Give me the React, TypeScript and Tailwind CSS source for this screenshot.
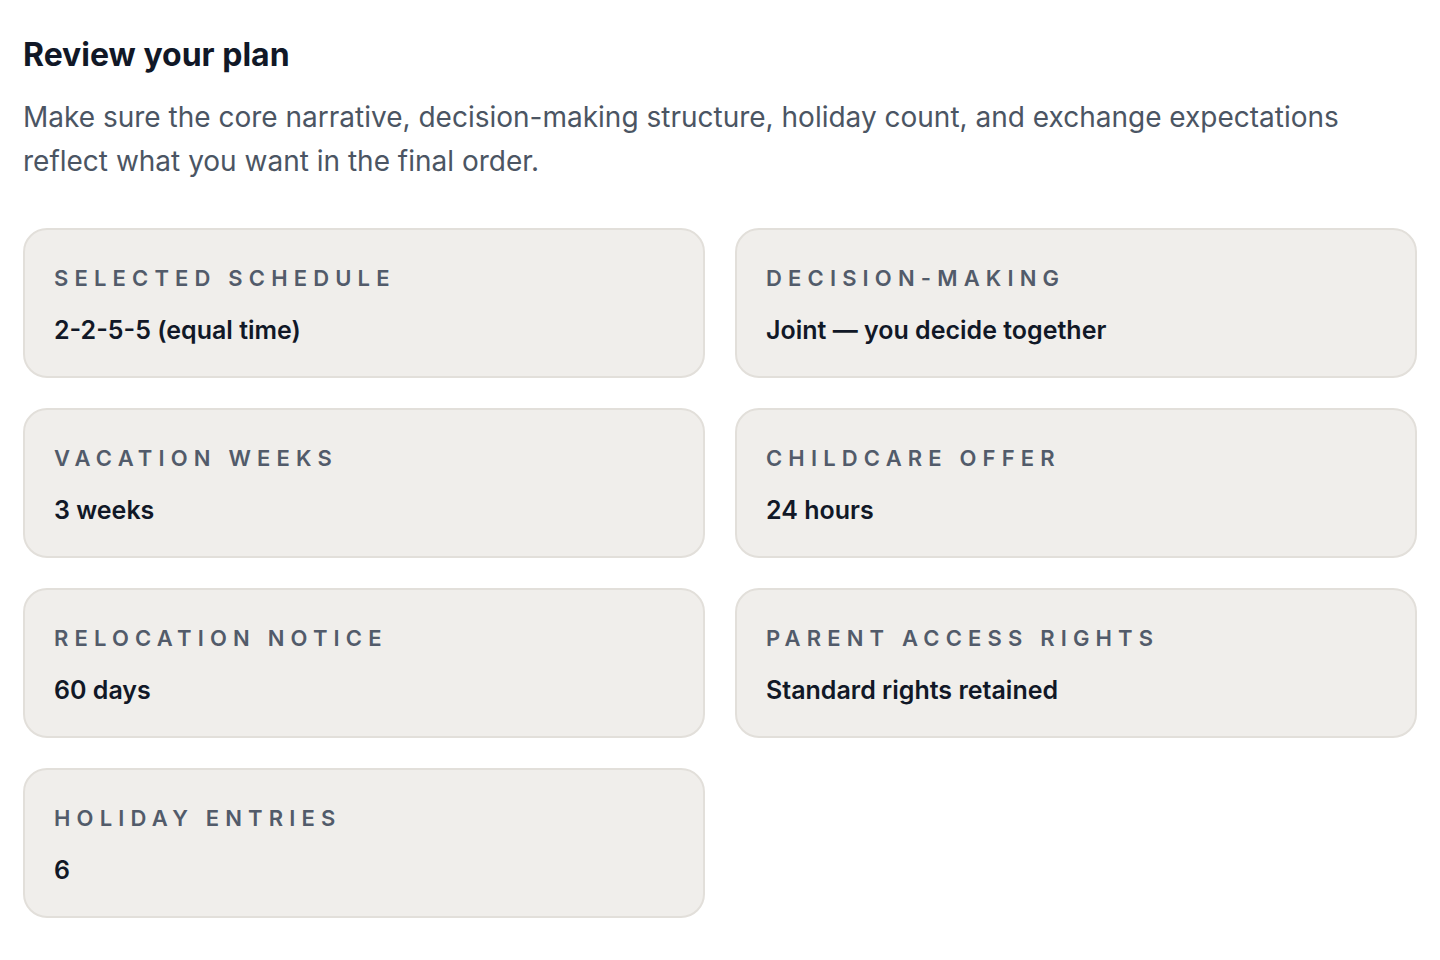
import React from 'react';

type PlanItem = {
  label: string;
  value: string;
};

const planItems: PlanItem[] = [
  { label: 'Selected schedule', value: '2-2-5-5 (equal time)' },
  { label: 'Decision-making', value: 'Joint — you decide together' },
  { label: 'Vacation weeks', value: '3 weeks' },
  { label: 'Childcare offer', value: '24 hours' },
  { label: 'Relocation notice', value: '60 days' },
  { label: 'Parent access rights', value: 'Standard rights retained' },
  { label: 'Holiday entries', value: '6' },
];

const SummaryCard: React.FC<{ item: PlanItem }> = ({ item }) => (
  <div className="h-[150px] rounded-[24px] border-2 border-[#e2dfda] bg-[#f0eeeb] px-[29px] pt-[33px]">
    <p className="text-[22px] leading-[30px] font-semibold uppercase tracking-[0.28em] text-[#525b6a]">
      {item.label}
    </p>
    <p className="mt-[19px] text-[25px] leading-[36px] font-semibold text-[#111827]">{item.value}</p>
  </div>
);

export default function App() {
  return (
    <div className="min-h-screen bg-white px-[23px] pt-[33px] font-['Inter','Liberation_Sans',sans-serif]">
      <h1 className="text-[32px] leading-[44px] font-bold text-[#111827]">Review your plan</h1>
      <p className="mt-[18px] text-[28px] leading-[44px] text-[#4b5563]">
        Make sure the core narrative, decision-making structure, holiday count, and exchange expectations
        reflect what you want in the final order.
      </p>
      <div className="mt-[45px] grid grid-cols-2 gap-[30px]">
        {planItems.map((item) => (
          <SummaryCard key={item.label} item={item} />
        ))}
      </div>
    </div>
  );
}
